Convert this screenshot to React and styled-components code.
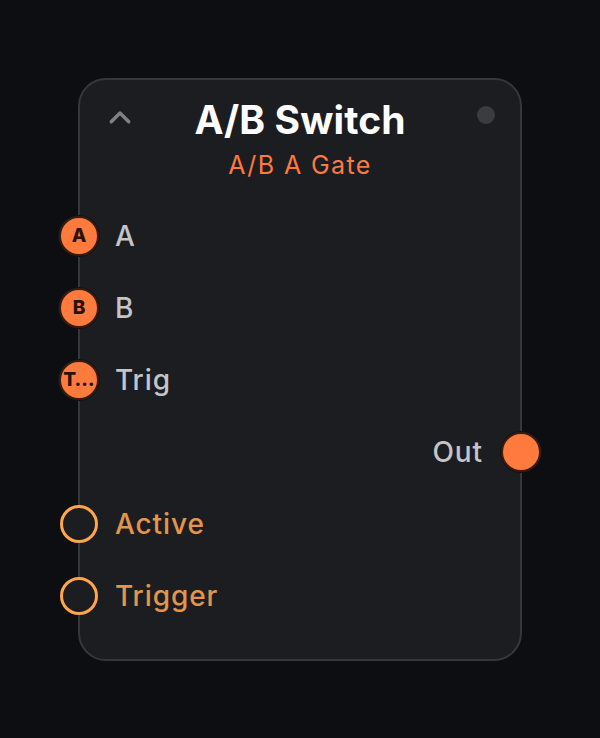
import React from "react";
import styled, { createGlobalStyle } from "styled-components";

const GlobalStyle = createGlobalStyle`
  html, body {
    margin: 0;
    padding: 0;
    background: #0d0e11;
  }
  body {
    font-family: Inter, "Noto Sans", sans-serif;
  }
`;

const Page = styled.div`
  width: 600px;
  height: 738px;
  display: flex;
  align-items: center;
  justify-content: center;
  background: #0d0e11;
`;

const Node = styled.div`
  position: relative;
  box-sizing: border-box;
  width: 444px;
  height: 583px;
  background: #1c1d21;
  border: 2px solid #36373b;
  border-radius: 28px;
  padding: 18px 0 0;
  display: flex;
  flex-direction: column;
`;

const Header = styled.header`
  position: relative;
  display: flex;
  flex-direction: column;
  align-items: center;
  height: 102px;
`;

const Collapse = styled.button`
  position: absolute;
  left: 25px;
  top: 5px;
  background: none;
  border: 0;
  padding: 0;
  display: flex;
  color: #808186;
`;

const StatusDot = styled.span`
  position: absolute;
  right: 25px;
  top: 8px;
  width: 18px;
  height: 18px;
  border-radius: 50%;
  background: #3b3c40;
`;

const Title = styled.h1`
  margin: 0;
  font-size: 39px;
  line-height: 44px;
  font-weight: 700;
  color: #ffffff;
  letter-spacing: 0.1px;
`;

const Subtitle = styled.div`
  margin-top: 7px;
  font-size: 25px;
  line-height: 32px;
  font-weight: 400;
  color: #ff7a3d;
  letter-spacing: 1.4px;
`;

const Row = styled.div`
  position: relative;
  height: 72px;
  display: flex;
  align-items: center;
  justify-content: ${p => (p.out ? "flex-end" : "flex-start")};
  padding: 0 37px 0 35px;
`;

const Label = styled.span`
  font-size: 28px;
  font-weight: 500;
  color: ${p => (p.event ? "#e3954a" : "#c4c4c9")};
  letter-spacing: 0.9px;
`;

const Port = styled.span`
  position: absolute;
  top: 50%;
  ${p => (p.out ? "right: -21px;" : "left: -21px;")}
  transform: translateY(-50%);
  box-sizing: border-box;
  width: 40px;
  height: 40px;
  border-radius: 50%;
  background: #ff7a3d;
  border: 2px solid #3a1c0e;
  box-shadow: 0 0 0 1px #141416;
  display: flex;
  align-items: center;
  justify-content: center;
  font-size: 19px;
  font-weight: 800;
  color: #2a1208;
  overflow: hidden;
  white-space: nowrap;
`;

const EventPort = styled.span`
  position: absolute;
  top: 50%;
  left: -20px;
  transform: translateY(-50%);
  box-sizing: border-box;
  width: 38px;
  height: 38px;
  border-radius: 50%;
  border: 3.5px solid #ffa64a;
  background: #1c1d21;
`;

const inputs = [
  { tag: "A", label: "A" },
  { tag: "B", label: "B" },
  { tag: "T…", label: "Trig" }
];

const events = ["Active", "Trigger"];

const ChevronUp = () => (
  <svg width="30" height="30" viewBox="0 0 24 24" fill="none" stroke="currentColor" strokeWidth="2.8" strokeLinecap="round" strokeLinejoin="round">
    <path d="M5 15l7-7 7 7" />
  </svg>
);

export default function App() {
  return (
    <Page>
      <GlobalStyle />
      <Node>
        <Header>
          <Collapse>
            <ChevronUp />
          </Collapse>
          <StatusDot />
          <Title>A/B Switch</Title>
          <Subtitle>A/B A Gate</Subtitle>
        </Header>

        {inputs.map(i => (
          <Row key={i.label}>
            <Port>{i.tag}</Port>
            <Label>{i.label}</Label>
          </Row>
        ))}

        <Row out>
          <Label>Out</Label>
          <Port out />
        </Row>

        {events.map(e => (
          <Row key={e}>
            <EventPort />
            <Label event>{e}</Label>
          </Row>
        ))}
      </Node>
    </Page>
  );
}
